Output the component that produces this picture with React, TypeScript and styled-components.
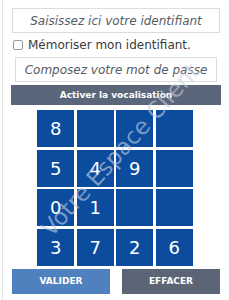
import React from "react";
import styled, { createGlobalStyle } from "styled-components";

const GlobalStyle = createGlobalStyle`
  body {
    margin: 0;
    background: #ffffff;
    font-family: "DejaVu Sans", Verdana, sans-serif;
  }
`;

const Panel = styled.div`
  position: relative;
  margin-left: 2px;
  width: 220px;
  height: 296px;
  border-left: 1px solid #e4e4e4;
  border-right: 1px solid #e8e8e8;
  border-bottom: 2px solid #6f7a8a;
  padding: 8px 2px 0 9px;
  box-sizing: content-box;
  overflow: hidden;
`;

const Column = styled.div`
  width: 208px;
  display: flex;
  flex-direction: column;
`;

const Field = styled.div<{ inset?: number }>`
  height: 23px;
  margin: 0 ${(p) => p.inset ?? 0}px;
  border: 1px solid #dcdcdc;
  display: flex;
  align-items: center;
  justify-content: center;
  font-style: italic;
  font-size: 12px;
  color: #555b63;
`;

const CheckRow = styled.label`
  display: flex;
  align-items: center;
  height: 24px;
  padding-left: 1px;
  font-size: 12px;
  color: #3a3a3a;
`;

const Box = styled.span`
  width: 8px;
  height: 8px;
  border: 1px solid #9a9a9a;
  border-radius: 2px;
  margin-right: 5px;
`;

const VoiceBar = styled.div`
  height: 20px;
  margin: 3px -1px 0 -1px;
  background: #5a6679;
  color: #ffffff;
  font-weight: bold;
  font-size: 9px;
  display: flex;
  align-items: center;
  justify-content: center;
`;

const Pad = styled.div`
  display: grid;
  grid-template-columns: repeat(4, 37px);
  grid-auto-rows: 37px;
  gap: 2.5px;
  align-self: center;
  margin: 5px 0 0 -2px;
`;

const Key = styled.div`
  background: #0b4c9f;
  color: #ffffff;
  font-size: 18px;
  display: flex;
  align-items: center;
  justify-content: center;
`;

const Actions = styled.div`
  display: flex;
  justify-content: space-between;
  margin-top: 3px;
`;

const Action = styled.div<{ tone: string }>`
  width: 98px;
  height: 25px;
  background: ${(p) => p.tone};
  color: #ffffff;
  font-weight: bold;
  font-size: 9px;
  display: flex;
  align-items: center;
  justify-content: center;
`;

const Watermark = styled.div`
  position: absolute;
  left: 33px;
  top: 224px;
  transform: rotate(-48deg);
  transform-origin: left top;
  font-size: 23px;
  color: rgba(200, 208, 222, 0.6);
  white-space: nowrap;
  pointer-events: none;
`;

const keys = ["8", "", "", "", "5", "4", "9", "", "0", "1", "", "", "3", "7", "2", "6"];

export default function App() {
  return (
    <>
      <GlobalStyle />
      <Panel>
        <Column>
          <Field>Saisissez ici votre identifiant</Field>
          <CheckRow>
            <Box />
            Mémoriser mon identifiant.
          </CheckRow>
          <Field inset={3}>Composez votre mot de passe</Field>
          <VoiceBar>Activer la vocalisation</VoiceBar>
          <Pad>
            {keys.map((k, i) => (
              <Key key={i}>{k}</Key>
            ))}
          </Pad>
          <Actions>
            <Action tone="#4f81bf">VALIDER</Action>
            <Action tone="#5b6576">EFFACER</Action>
          </Actions>
        </Column>
        <Watermark>Votre Espace Client</Watermark>
      </Panel>
    </>
  );
}
